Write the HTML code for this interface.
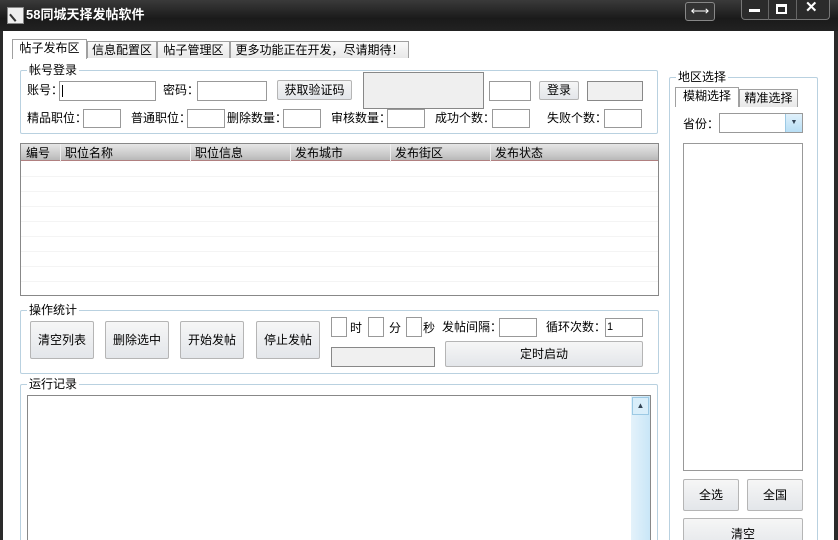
<!DOCTYPE html>
<html><head><meta charset="utf-8"><style>
*{box-sizing:border-box;margin:0;padding:0}
html{width:838px;height:540px;overflow:hidden}
body{width:838px;height:540px;overflow:hidden;background:#fff;font-family:"Liberation Sans","Noto Sans CJK SC","WenQuanYi Zen Hei",sans-serif;font-size:12px;color:#000;position:relative}
.a{position:absolute}
.t{position:absolute;line-height:14px;white-space:nowrap}
.in{position:absolute;border:1px solid #999;background:#fff}
.btn{position:absolute;border:1px solid #b5b5b5;border-radius:2px;background:linear-gradient(#f6f6f6,#e3e6ea);text-align:center;white-space:nowrap}
.grp{position:absolute;border:1px solid #b9d1e0;border-radius:2px}
.gl{position:absolute;background:#fff;padding:0 2px;line-height:14px;top:-8px;left:6px}
.tab{position:absolute;border:1px solid #a0a0a0;border-bottom:none;background:linear-gradient(#fafafa,#e8e8e8);text-align:center;line-height:16px}
</style></head><body>
<div class="a" style="left:0;top:0;width:838px;height:31px;background:linear-gradient(#3a3a3a,#1a1a1a 60%,#222)"></div>
<div class="a" style="left:0;top:31px;width:3px;height:509px;background:#2a2a2a"></div>
<div class="a" style="left:834px;top:31px;width:4px;height:509px;background:#2a2a2a"></div>
<div class="a" style="left:7px;top:7px;width:17px;height:17px;background:#eee;border:1px solid #888"><div style="margin:3px;width:9px;height:9px;border-left:2px solid #333;transform:rotate(-40deg)"></div></div>
<div class="t" style="left:26px;top:8px;color:#fff;font-weight:bold;font-size:13px">58同城天择发帖软件</div>
<div class="a" style="left:685px;top:2px;width:30px;height:19px;border:1px solid #888;border-radius:3px;background:#333;color:#fff;text-align:center;line-height:16px;font-size:13px">⟷</div>
<div class="a" style="left:741px;top:0;width:89px;height:20px;border:1px solid #777;border-top:none;border-radius:0 0 4px 4px;background:#2b2b2b"></div>
<div class="a" style="left:749px;top:9px;width:11px;height:3px;background:#fff"></div>
<div class="a" style="left:776px;top:4px;width:11px;height:10px;border:2px solid #fff;border-top-width:3px"></div>
<div class="t" style="left:805px;top:1px;color:#fff;font-weight:bold;font-size:15px">✕</div>
<div class="a" style="left:768px;top:0;width:1px;height:20px;background:#666"></div>
<div class="a" style="left:796px;top:0;width:1px;height:20px;background:#666"></div>

<div class="tab" style="left:12px;top:39px;width:75px;height:20px;background:#fff;z-index:2">帖子发布区</div>
<div class="tab" style="left:87px;top:41px;width:70px;height:17px">信息配置区</div>
<div class="tab" style="left:157px;top:41px;width:73px;height:17px">帖子管理区</div>
<div class="tab" style="left:230px;top:41px;width:179px;height:17px">更多功能正在开发，尽请期待！</div>

<div class="grp" style="left:20px;top:70px;width:638px;height:64px"><span class="gl">帐号登录</span></div>
<div class="t" style="left:27px;top:83px">账号：</div><div class="in" style="left:59px;top:81px;width:97px;height:20px"><div style="margin:3px 0 0 2px;width:1px;height:12px;background:#000"></div></div>
<div class="t" style="left:163px;top:83px">密码：</div><div class="in" style="left:197px;top:81px;width:70px;height:20px"></div>
<div class="btn" style="left:277px;top:80px;width:75px;height:20px;line-height:18px">获取验证码</div>
<div class="a" style="left:363px;top:72px;width:121px;height:37px;border:1px solid #888;background:#efefef"></div>
<div class="in" style="left:489px;top:81px;width:42px;height:20px"></div>
<div class="btn" style="left:539px;top:81px;width:40px;height:19px;line-height:17px">登录</div>
<div class="a" style="left:587px;top:81px;width:56px;height:20px;border:1px solid #888;background:#f0f0f0"></div>
<div class="t" style="left:27px;top:111px">精品职位：</div><div class="in" style="left:83px;top:109px;width:38px;height:19px"></div>
<div class="t" style="left:131px;top:111px">普通职位：</div><div class="in" style="left:187px;top:109px;width:38px;height:19px"></div>
<div class="t" style="left:227px;top:111px">删除数量：</div><div class="in" style="left:283px;top:109px;width:38px;height:19px"></div>
<div class="t" style="left:331px;top:111px">审核数量：</div><div class="in" style="left:387px;top:109px;width:38px;height:19px"></div>
<div class="t" style="left:435px;top:111px">成功个数：</div><div class="in" style="left:492px;top:109px;width:38px;height:19px"></div>
<div class="t" style="left:547px;top:111px">失败个数：</div><div class="in" style="left:604px;top:109px;width:38px;height:19px"></div>

<div class="a" style="left:20px;top:143px;width:639px;height:153px;border:1px solid #888;background:#fff;overflow:hidden">
<div class="a" style="left:0;top:0;width:637px;height:17px;background:linear-gradient(#e6e6e6,#c8c8c8 70%,#b8b8b8);border-bottom:1px solid #b08080"></div>
<div class="t" style="left:5px;top:2px">编号</div><div class="t" style="left:44px;top:2px">职位名称</div><div class="t" style="left:174px;top:2px">职位信息</div><div class="t" style="left:274px;top:2px">发布城市</div><div class="t" style="left:374px;top:2px">发布街区</div><div class="t" style="left:474px;top:2px">发布状态</div>
<div class="a" style="left:39px;top:0;width:1px;height:151px;background:#eee"></div><div class="a" style="left:169px;top:0;width:1px;height:151px;background:#eee"></div><div class="a" style="left:269px;top:0;width:1px;height:151px;background:#eee"></div><div class="a" style="left:369px;top:0;width:1px;height:151px;background:#eee"></div><div class="a" style="left:469px;top:0;width:1px;height:151px;background:#eee"></div><div class="a" style="left:529px;top:18px;width:1px;height:133px;background:#eee"></div>
<div class="a" style="left:0;top:18px;width:637px;height:133px;background:repeating-linear-gradient(#fff 0,#fff 14px,#f4f4f4 14px,#f4f4f4 15px)"></div>
</div>

<div class="grp" style="left:20px;top:310px;width:639px;height:64px"><span class="gl">操作统计</span></div>
<div class="btn" style="left:30px;top:321px;width:64px;height:38px;line-height:36px">清空列表</div>
<div class="btn" style="left:105px;top:321px;width:64px;height:38px;line-height:36px">删除选中</div>
<div class="btn" style="left:180px;top:321px;width:64px;height:38px;line-height:36px">开始发帖</div>
<div class="btn" style="left:256px;top:321px;width:64px;height:38px;line-height:36px">停止发帖</div>
<div class="in" style="left:331px;top:317px;width:16px;height:20px"></div><div class="t" style="left:350px;top:321px">时</div>
<div class="in" style="left:368px;top:317px;width:16px;height:20px"></div><div class="t" style="left:389px;top:321px">分</div>
<div class="in" style="left:406px;top:317px;width:16px;height:20px"></div><div class="t" style="left:423px;top:321px">秒</div>
<div class="t" style="left:442px;top:320px">发帖间隔：</div><div class="in" style="left:499px;top:318px;width:38px;height:19px"></div>
<div class="t" style="left:546px;top:320px">循环次数：</div><div class="in" style="left:605px;top:318px;width:38px;height:19px;font-size:11px;line-height:17px;padding-left:1px">1</div>
<div class="a" style="left:331px;top:347px;width:104px;height:20px;border:1px solid #888;background:#f0f0f0"></div>
<div class="btn" style="left:445px;top:341px;width:198px;height:26px;line-height:24px">定时启动</div>

<div class="grp" style="left:20px;top:384px;width:638px;height:170px"><span class="gl">运行记录</span></div>
<div class="a" style="left:27px;top:395px;width:624px;height:150px;border:1px solid #888;background:#fff"></div>
<div class="a" style="left:631px;top:396px;width:19px;height:144px;background:linear-gradient(90deg,#e4f2fb,#c9e6f7)"></div>
<div class="a" style="left:632px;top:397px;width:17px;height:18px;border:1px solid #9cc9e4;background:#d9eefa;font-size:8px;text-align:center;line-height:15px;color:#345">▲</div>

<div class="grp" style="left:669px;top:77px;width:149px;height:480px"><span class="gl">地区选择</span></div>
<div class="tab" style="left:675px;top:87px;width:64px;height:20px;background:#fff;z-index:2">模糊选择</div>
<div class="tab" style="left:739px;top:89px;width:59px;height:18px">精准选择</div>
<div class="t" style="left:683px;top:117px">省份：</div>
<div class="in" style="left:719px;top:113px;width:84px;height:20px"></div>
<div class="a" style="left:785px;top:114px;width:17px;height:18px;background:linear-gradient(#e0f1fb,#b8dff5);border-left:1px solid #9cc9e4;font-size:7px;text-align:center;line-height:18px;color:#345">▼</div>
<div class="in" style="left:683px;top:143px;width:120px;height:328px"></div>
<div class="btn" style="left:683px;top:479px;width:56px;height:32px;line-height:30px">全选</div>
<div class="btn" style="left:747px;top:479px;width:56px;height:32px;line-height:30px">全国</div>
<div class="btn" style="left:683px;top:518px;width:120px;height:32px;line-height:30px">清空</div>
</body></html>
